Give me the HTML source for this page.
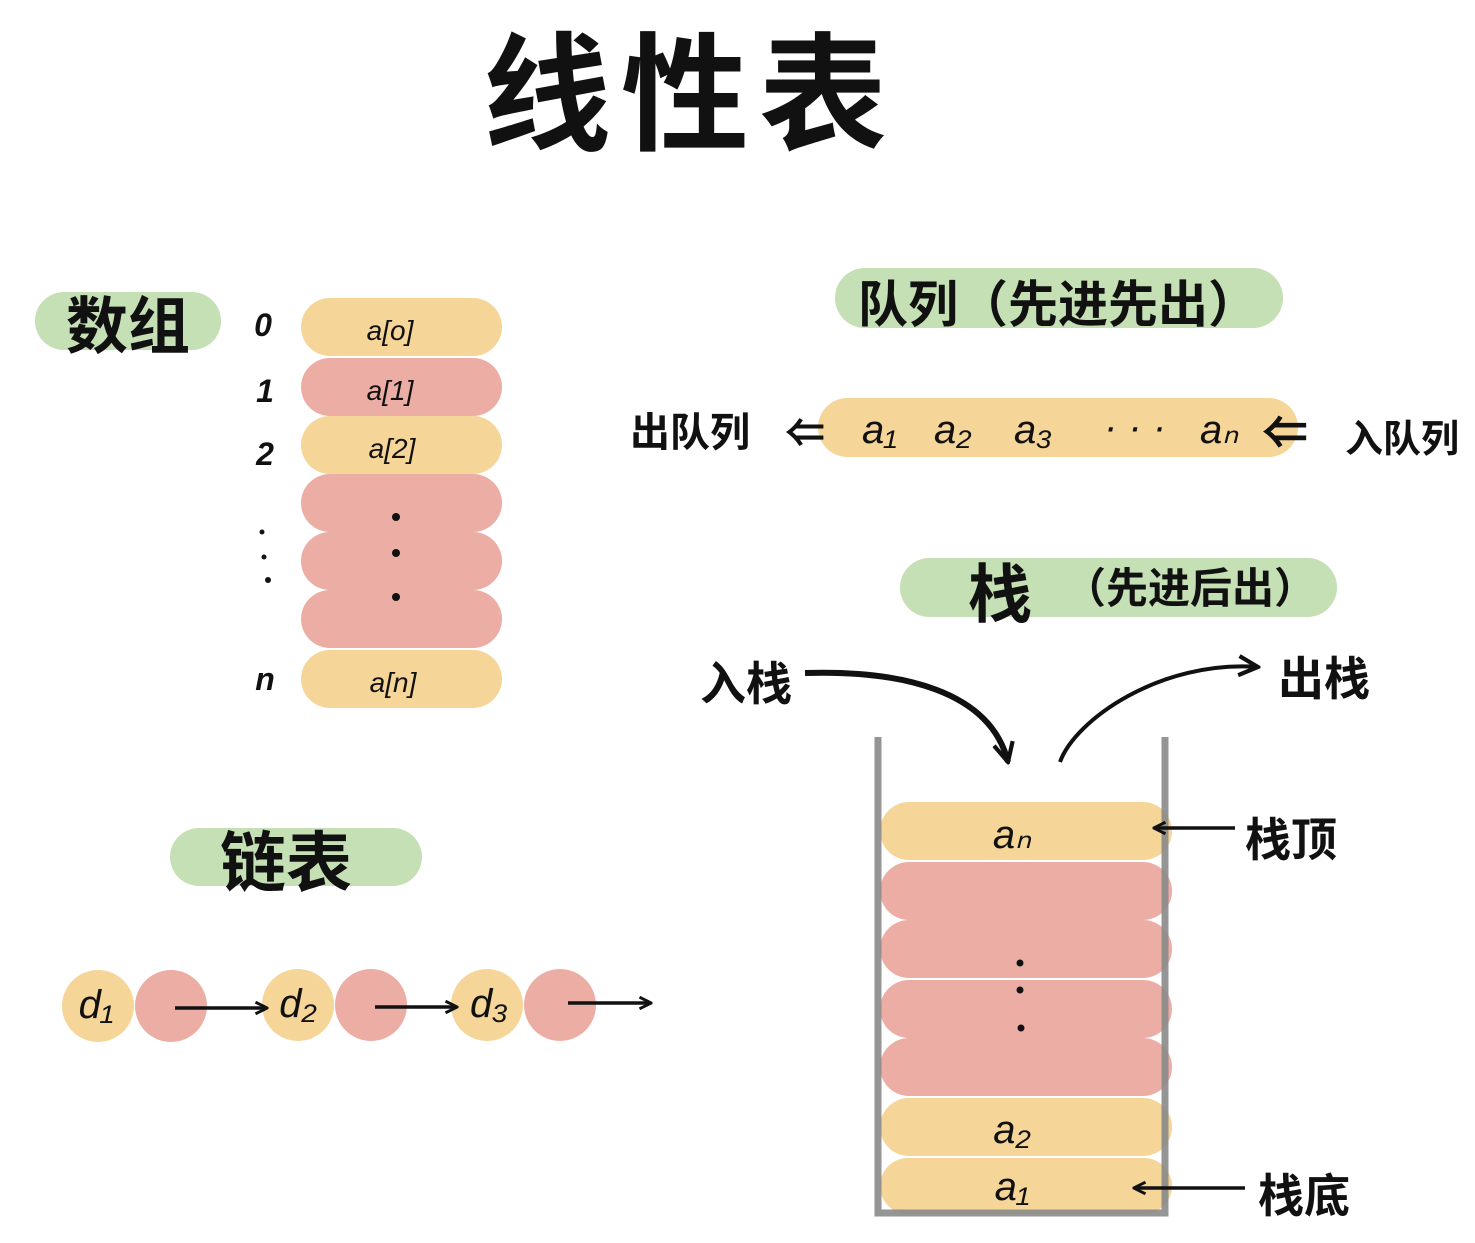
<!DOCTYPE html>
<html><head><meta charset="utf-8">
<style>
html,body{margin:0;padding:0;background:#fff;}
svg{display:block;}
text{font-family:"Liberation Sans","Noto Sans CJK SC",sans-serif;fill:#111;}
.cj{font-family:"Noto Sans CJK SC","WenQuanYi Zen Hei",sans-serif;font-weight:bold;}
.it{font-family:"Liberation Serif",serif;font-style:italic;}
</style></head>
<body>
<svg width="1475" height="1243" viewBox="0 0 1475 1243" xmlns="http://www.w3.org/2000/svg">
<defs>
<marker id="ah" viewBox="0 0 12 12" refX="10" refY="6" markerWidth="14" markerHeight="14" markerUnits="userSpaceOnUse" orient="auto">
<path d="M1 1 L11 6 L1 11" fill="none" stroke="#111" stroke-width="2.5"/></marker>
<marker id="ah2" viewBox="0 0 20 20" refX="18" refY="10" markerWidth="24" markerHeight="24" markerUnits="userSpaceOnUse" orient="auto">
<path d="M2 2 L18 10 L2 18" fill="none" stroke="#111" stroke-width="3.5"/></marker>
</defs>

<text x="690" y="140" class="cj" font-size="128" text-anchor="middle" letter-spacing="10">线性表</text>

<rect x="35" y="292" width="186" height="58" rx="29" fill="#C4E0B4"/>
<text x="128" y="348" class="cj" font-size="62" text-anchor="middle">数组</text>

<g fill="#F5D598"><rect x="301" y="298" width="201" height="58" rx="29"/><rect x="301" y="416" width="201" height="58" rx="29"/><rect x="301" y="650" width="201" height="58" rx="29"/></g>
<g fill="#ECADA5"><rect x="301" y="358" width="201" height="58" rx="29"/><rect x="301" y="474" width="201" height="58" rx="29"/><rect x="301" y="532" width="201" height="58" rx="29"/><rect x="301" y="590" width="201" height="58" rx="29"/></g>
<g class="it" font-size="28" text-anchor="middle">
<text x="390" y="340">a[o]</text><text x="390" y="400">a[1]</text><text x="392" y="458">a[2]</text><text x="393" y="692">a[n]</text>
</g>
<g fill="#111"><circle cx="396" cy="517" r="4"/><circle cx="396" cy="553" r="4"/><circle cx="396" cy="597" r="4"/></g>
<g class="it" font-size="32" font-weight="bold" text-anchor="middle">
<text x="263" y="336">0</text><text x="265" y="402">1</text><text x="265" y="465">2</text><text x="265" y="690">n</text>
</g>
<g fill="#111"><circle cx="262" cy="532" r="2.5"/><circle cx="264" cy="557" r="2.5"/><circle cx="268" cy="580" r="3"/></g>

<rect x="835" y="268" width="448" height="60" rx="30" fill="#C4E0B4"/>
<text x="1058" y="322" class="cj" font-size="50" text-anchor="middle">队列（先进先出）</text>
<rect x="818" y="398" width="480" height="59" rx="29.5" fill="#F5D598"/>
<g class="it" font-size="40">
<text x="862" y="443">a₁</text><text x="934" y="443">a₂</text><text x="1014" y="443">a₃</text><text x="1104" y="440">· · ·</text><text x="1200" y="443">aₙ</text>
</g>
<text x="630" y="446" class="cj" font-size="40">出队列</text>
<text x="1345" y="452" class="cj" font-size="38">入队列</text>
<text x="785" y="447" font-size="40" font-weight="bold">⇐</text>
<text x="1262" y="449" font-size="46" font-weight="bold">⇐</text>

<rect x="900" y="558" width="437" height="59" rx="29.5" fill="#C4E0B4"/>
<text x="1000" y="617" class="cj" font-size="64" text-anchor="middle">栈</text>
<text x="1190" y="603" class="cj" font-size="42" text-anchor="middle">（先进后出）</text>

<text x="700" y="700" class="cj" font-size="46">入栈</text>
<text x="1278" y="695" class="cj" font-size="46">出栈</text>
<path d="M805 673 C 900 670, 990 690, 1008 762" fill="none" stroke="#111" stroke-width="6" marker-end="url(#ah2)"/>
<path d="M1060 762 C 1075 720, 1160 660, 1258 667" fill="none" stroke="#111" stroke-width="4" marker-end="url(#ah2)"/>

<g fill="#F5D598"><rect x="880" y="802" width="292" height="58" rx="29"/><rect x="880" y="1098" width="292" height="58" rx="29"/><rect x="880" y="1158" width="292" height="56" rx="28"/></g>
<g fill="#ECADA5"><rect x="880" y="862" width="292" height="58" rx="29"/><rect x="880" y="920" width="292" height="58" rx="29"/><rect x="880" y="980" width="292" height="58" rx="29"/><rect x="880" y="1038" width="292" height="58" rx="29"/></g>
<g stroke="#8a8a8a" stroke-width="7" fill="none" opacity="0.9"><path d="M878 737 V1213 H1165 V737"/></g>
<g class="it" font-size="40" text-anchor="middle">
<text x="1012" y="848">aₙ</text><text x="1012" y="1143">a₂</text><text x="1012" y="1200">a₁</text>
</g>
<g fill="#111"><circle cx="1020" cy="963" r="3.5"/><circle cx="1020" cy="990" r="3.5"/><circle cx="1021" cy="1028" r="3.5"/></g>
<line x1="1235" y1="828" x2="1155" y2="828" stroke="#111" stroke-width="3.5" marker-end="url(#ah)"/>
<text x="1245" y="856" class="cj" font-size="46">栈顶</text>
<line x1="1245" y1="1188" x2="1135" y2="1188" stroke="#111" stroke-width="3.5" marker-end="url(#ah)"/>
<text x="1258" y="1212" class="cj" font-size="46">栈底</text>

<rect x="170" y="828" width="252" height="58" rx="29" fill="#C4E0B4"/>
<text x="286" y="886" class="cj" font-size="66" text-anchor="middle">链表</text>
<g fill="#F5D598"><circle cx="98" cy="1006" r="36"/><circle cx="298" cy="1005" r="36"/><circle cx="487" cy="1005" r="36"/></g>
<g fill="#ECADA5"><circle cx="171" cy="1006" r="36"/><circle cx="371" cy="1005" r="36"/><circle cx="560" cy="1005" r="36"/></g>
<g class="it" font-size="40" text-anchor="middle">
<text x="96" y="1018">d₁</text><text x="298" y="1017">d₂</text><text x="489" y="1017">d₃</text>
</g>
<g stroke="#111" stroke-width="3.5">
<line x1="175" y1="1008" x2="266" y2="1008" marker-end="url(#ah)"/>
<line x1="375" y1="1007" x2="456" y2="1007" marker-end="url(#ah)"/>
<line x1="568" y1="1003" x2="650" y2="1003" marker-end="url(#ah)"/>
</g>
</svg>
</body></html>
